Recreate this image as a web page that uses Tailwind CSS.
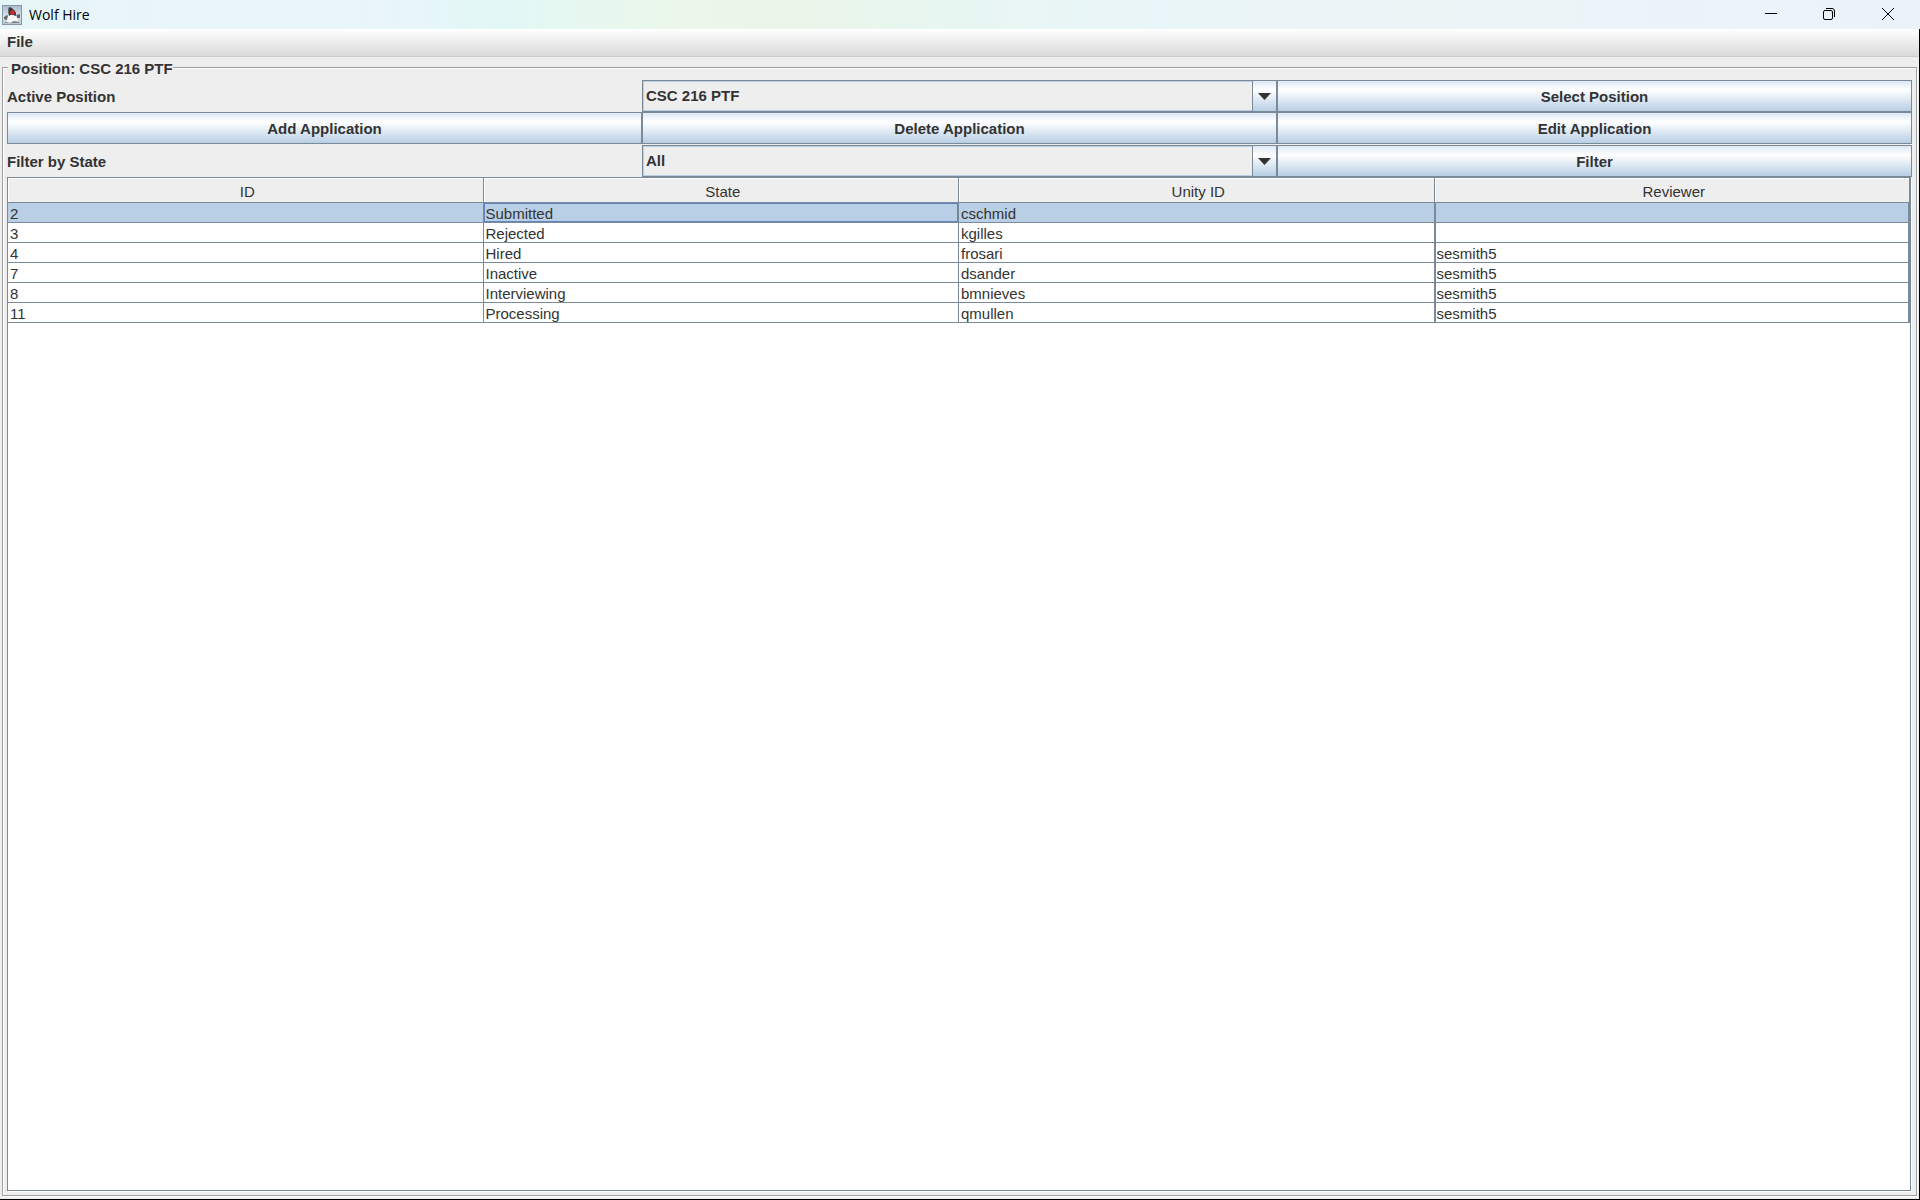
<!DOCTYPE html>
<html lang="en">
<head>
  <meta charset="utf-8"/>
  <meta content="width=device-width, initial-scale=1.0" name="viewport"/>
  <title>Wolf Hire</title>
  <script src="https://cdn.jsdelivr.net/npm/@tailwindcss/browser@4"></script>
</head>
<body class="h-screen flex flex-col bg-[#eeeeee] text-[15px] text-[#333333] font-['Liberation_Sans',Arial,sans-serif]">
  <!-- Title bar -->
  <header class="h-[29px] shrink-0 flex items-center justify-between bg-[linear-gradient(to_right,#e6f6f6,#eaf4fb_9%,#eaf4fb_18%,#e2f8f6_26%,#ebf7ea_35%,#ebf6e8_40%,#e8f6f2_50%,#e9f5f8_60%,#edf4f6_75%,#ebf3fb_90%,#ebf3fa)] text-black">
    <div class="flex items-center gap-[7px] pl-0.5">
      <svg class="size-5" viewBox="0 0 20 20" aria-hidden="true">
        <defs>
          <linearGradient id="iconBg" x1="0" y1="0" x2="0" y2="1">
            <stop offset="0" stop-color="#a9bac9"/>
            <stop offset="0.6" stop-color="#dde5ec"/>
            <stop offset="1" stop-color="#b9c3cb"/>
          </linearGradient>
        </defs>
        <rect x="0.5" y="0.5" width="19" height="19" fill="url(#iconBg)" stroke="#8799a9"/>
        <path d="M2 12L5 10L7 12L5 15L2 14Z" fill="#5f666c"/>
        <path d="M14 10L18 9L18 13L15 13Z" fill="#5f666c"/>
        <path d="M7 8L13 8C15 11 15 14 16 17L12 16L8 18L5 17C5 13 6 11 7 8Z" fill="#f6f6f6"/>
        <path d="M7 2C9 2 13 5 14 8C14 10 14 11 13 11C11 9 9 9 7 11C6 8 6 4 7 2Z" fill="#38383d"/>
        <path d="M3 17L8 18L12 16L17 17V18H3Z" fill="#7d858b"/>
        <circle cx="10.5" cy="7.5" r="2.3" fill="#d62828"/>
      </svg>
      <h1 class="text-sm font-['Open_Sans','Noto_Sans',sans-serif]">Wolf Hire</h1>
    </div>
    <div class="flex h-full pr-0.5 pb-px">
      <button aria-label="Minimize" class="w-[58px] grid place-items-center">
        <svg class="size-3" viewBox="0 0 12 12" fill="none" stroke="currentColor"><path d="M0 5.5H12"/></svg>
      </button>
      <button aria-label="Restore" class="w-[58px] grid place-items-center">
        <svg class="size-3" viewBox="0 0 12 12" fill="none" stroke="currentColor"><rect x="0.5" y="2.5" width="9" height="9" rx="1.5"/><path d="M3 0.5H9Q11.5 0.5 11.5 3V9"/></svg>
      </button>
      <button aria-label="Close" class="w-[60px] grid place-items-center">
        <svg class="size-3" viewBox="0 0 12 12" fill="none" stroke="currentColor"><path d="M0 0L12 12M12 0L0 12"/></svg>
      </button>
    </div>
  </header>

  <div class="flex-1 min-h-0 flex flex-col border-r border-b border-black">
    <!-- Menu bar -->
    <nav class="h-7 shrink-0 flex items-center border-b border-[#cccccc] bg-linear-to-b from-white to-[#dadada] px-[7px] pb-0.5">
      <button class="font-bold leading-4">File</button>
    </nav>

    <fieldset class="flex-1 min-h-0 min-w-0 mx-0.5 mb-[3px] border border-[#9f9f9f] shadow-[1px_1px_0_white,inset_1px_1px_0_white] px-1">
      <legend class="ml-px bg-[#eeeeee] pl-[3px] pt-1 font-bold leading-4">Position: CSC 216 PTF</legend>
      <div class="h-full flex flex-col pt-[3px] pb-[3px]">
        <div class="grid grid-cols-3 auto-rows-[32px] font-bold">
          <label for="position" class="self-center pt-0.5">Active Position</label>
          <div class="relative">
            <select id="position" class="appearance-none size-full border border-[#7a8a99] pl-[3px] shadow-[inset_0_0_0_1px_#b8cfe5] font-bold">
              <option>CSC 216 PTF</option>
            </select>
            <span class="absolute inset-y-px right-px w-6 grid place-items-center border-l border-[#7a8a99] bg-linear-to-b from-[#dde8f3] via-white via-30% to-[#b8cfe5] pointer-events-none">
              <svg class="w-[13px] h-[7px]" viewBox="0 0 13 7"><path d="M0 0H13L6.5 7Z" fill="#333333"/></svg>
            </span>
          </div>
          <button class="border border-[#7a8a99] bg-linear-to-b from-[#dde8f3] via-white via-30% to-[#b8cfe5] pt-0.5">Select Position</button>
          <button class="border border-[#7a8a99] bg-linear-to-b from-[#dde8f3] via-white via-30% to-[#b8cfe5] pt-0.5">Add Application</button>
          <button class="border border-[#7a8a99] bg-linear-to-b from-[#dde8f3] via-white via-30% to-[#b8cfe5] pt-0.5">Delete Application</button>
          <button class="border border-[#7a8a99] bg-linear-to-b from-[#dde8f3] via-white via-30% to-[#b8cfe5] pt-0.5">Edit Application</button>
        </div>
        <div class="mt-px grid grid-cols-3 auto-rows-[32px] font-bold">
          <label for="state" class="self-center pt-0.5">Filter by State</label>
          <div class="relative">
            <select id="state" class="appearance-none size-full border border-[#7a8a99] pl-[3px] shadow-[inset_0_0_0_1px_#b8cfe5] font-bold">
              <option>All</option>
            </select>
            <span class="absolute inset-y-px right-px w-6 grid place-items-center border-l border-[#7a8a99] bg-linear-to-b from-[#dde8f3] via-white via-30% to-[#b8cfe5] pointer-events-none">
              <svg class="w-[13px] h-[7px]" viewBox="0 0 13 7"><path d="M0 0H13L6.5 7Z" fill="#333333"/></svg>
            </span>
          </div>
          <button class="border border-[#7a8a99] bg-linear-to-b from-[#dde8f3] via-white via-30% to-[#b8cfe5] pt-0.5">Filter</button>
        </div>

        <!-- Applications table -->
        <div class="flex-1 min-h-0 mr-px mb-px overflow-hidden border border-[#7a8a99] bg-white shadow-[1px_1px_0_white]">
          <table class="w-full table-fixed border-separate border-spacing-0 leading-[17px] [&_td]:h-5 [&_td]:p-0 [&_td]:pt-0.5 [&_td]:pl-0.5 [&_td]:border-r [&_td]:border-b [&_td]:border-[#7a8a99] [&_td:last-child]:border-l [&_td:last-child]:border-r-2 [&_td:last-child]:pl-px">
            <thead>
              <tr class="[&>th]:h-[25px] [&>th]:p-0 [&>th]:pt-0.5 [&>th]:pl-1 [&>th]:font-normal [&>th]:bg-[#eeeeee] [&>th]:border-r [&>th]:border-b [&>th]:border-[#7a8a99] [&>th]:shadow-[inset_1px_1px_0_white]">
                <th class="w-[calc(25%-1px)]">ID</th>
                <th class="w-[calc(25%-1px)]">State</th>
                <th class="w-[25%]">Unity ID</th>
                <th>Reviewer</th>
              </tr>
            </thead>
            <tbody>
              <tr class="bg-[#b8cfe5]">
                <td>2</td>
                <td class="shadow-[inset_0_0_0_1px_#6382bf]">Submitted</td>
                <td>cschmid</td>
                <td></td>
              </tr>
              <tr>
                <td>3</td>
                <td>Rejected</td>
                <td>kgilles</td>
                <td></td>
              </tr>
              <tr>
                <td>4</td>
                <td>Hired</td>
                <td>frosari</td>
                <td>sesmith5</td>
              </tr>
              <tr>
                <td>7</td>
                <td>Inactive</td>
                <td>dsander</td>
                <td>sesmith5</td>
              </tr>
              <tr>
                <td>8</td>
                <td>Interviewing</td>
                <td>bmnieves</td>
                <td>sesmith5</td>
              </tr>
              <tr>
                <td>11</td>
                <td>Processing</td>
                <td>qmullen</td>
                <td>sesmith5</td>
              </tr>
            </tbody>
          </table>
        </div>
      </div>
    </fieldset>
  </div>
</body>
</html>
